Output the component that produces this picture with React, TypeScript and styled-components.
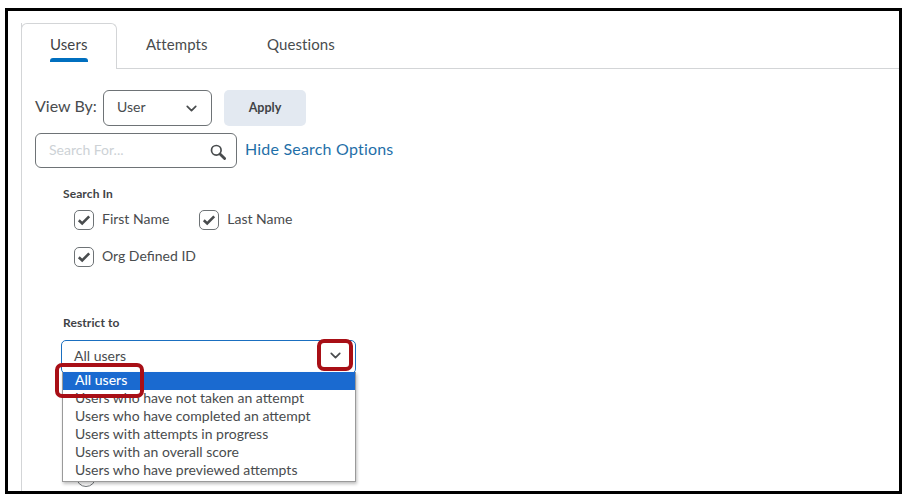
import styled, { createGlobalStyle } from 'styled-components'
import { ChevronDown } from 'lucide-react'

const Global = createGlobalStyle`
  html, body { margin: 0; padding: 0; background: #fff; }
  body { font-family: Lato, "Open Sans", sans-serif; color: #494c4e; }
`

const Frame = styled.div`
  box-sizing: border-box;
  width: 897px;
  height: 486px;
  margin: 8px 0 0 5px;
  border: 3px solid #000;
  padding: 12px 0 0 13px;
  overflow: hidden;
  background: #fff;
`

const Panel = styled.div`
  height: 480px;
  border-left: 1px solid #d3d5d7;
`

const TabBar = styled.div`
  display: flex;
  height: 45px;
  margin-left: -1px;
  border-bottom: 1px solid #d3d5d7;
`

const Tab = styled.div<{ $active?: boolean; $width: number }>`
  box-sizing: border-box;
  position: relative;
  width: ${p => p.$width}px;
  height: ${p => (p.$active ? 46 : 45)}px;
  padding: 12px 0 0 ${p => (p.$active ? 28 : 29)}px;
  font-size: 15px;
  line-height: 18px;
  letter-spacing: 0.1px;
  background: #fff;
  ${p =>
    p.$active &&
    `border: 1px solid #d3d5d7; border-bottom: 0; border-radius: 6px 6px 0 0; padding-top: 11px; color: #3f4346;`}
`

const TabMark = styled.span`
  position: absolute;
  left: 28px;
  top: 34px;
  width: 38px;
  height: 4px;
  border-radius: 3px 3px 0 0;
  background: #006fbf;
`

const Content = styled.div`
  padding: 0 0 0 13px;
`

const ViewRow = styled.div`
  display: flex;
  align-items: center;
  height: 36px;
  margin-top: 21px;
`

const ViewLabel = styled.span`
  width: 68px;
  font-size: 16px;
  margin-top: -5px;
`

const Caret = styled(ChevronDown)`
  margin-top: 3px;
`

const ViewSelect = styled.div`
  box-sizing: border-box;
  display: flex;
  align-items: center;
  justify-content: space-between;
  width: 109px;
  height: 36px;
  padding: 0 11px 3px 13px;
  border: 1px solid #6e7376;
  border-radius: 6px;
  font-size: 14px;
`

const ApplyButton = styled.div`
  display: flex;
  align-items: center;
  justify-content: center;
  width: 82px;
  height: 36px;
  padding-bottom: 2px;
  box-sizing: border-box;
  margin-left: 12px;
  border-radius: 5px;
  background: #e3e9f1;
  color: #3f4346;
  font-size: 12.5px;
  font-weight: 700;
`

const SearchRow = styled.div`
  display: flex;
  align-items: center;
  height: 35px;
  margin-top: 7px;
`

const SearchBox = styled.div`
  box-sizing: border-box;
  display: flex;
  align-items: center;
  justify-content: space-between;
  width: 202px;
  height: 35px;
  padding: 0 10px 3px 13px;
  border: 1px solid #6e7376;
  border-radius: 6px;
  font-size: 14px;
  color: #cdd2d6;
`

const SearchGlyph = styled.svg`
  width: 16px;
  height: 16px;
  margin-top: 6px;
  color: #494c4e;
`

const HideLink = styled.span`
  margin: -5px 0 0 8px;
  font-size: 16px;
  letter-spacing: 0.2px;
  color: #1f6fa8;
`

const Options = styled.div`
  padding: 18px 0 0 28px;
`

const SectionLabel = styled.div`
  font-size: 12px;
  line-height: 16px;
  font-weight: 700;
  letter-spacing: 0.1px;
  color: #3f4346;
`

const CheckRow = styled.div`
  display: flex;
  height: 20px;
  margin: 8px 0 17px 11px;
`

const CheckItem = styled.label`
  display: flex;
  align-items: center;
  gap: 8px;
  margin-right: 30px;
  font-size: 14px;
  padding-bottom: 3px;
`

const CheckBox = styled.span`
  box-sizing: border-box;
  display: flex;
  align-items: center;
  justify-content: center;
  width: 20px;
  height: 20px;
  margin-bottom: -3px;
  border: 1px solid #6e7376;
  border-radius: 5px;
  color: #494c4e;
`

const RestrictLabel = styled(SectionLabel)`
  margin-top: 48px;
`

const RestrictWrap = styled.div`
  position: relative;
  width: 295px;
  margin: 9px 0 0 -2px;
`

const RestrictSelect = styled.div`
  box-sizing: border-box;
  display: flex;
  align-items: center;
  justify-content: space-between;
  height: 34px;
  padding: 0 11px 4px 12px;
  border: 1px solid #1a6fc0;
  border-radius: 5px;
  font-size: 14px;
`

const Menu = styled.ul`
  position: absolute;
  z-index: 2;
  left: 1px;
  top: 32px;
  width: 294px;
  height: 110px;
  margin: 0;
  padding: 0;
  list-style: none;
  background: #fff;
  border: 1px solid #9a9a9a;
  border-top: 0;
  box-sizing: border-box;
  box-shadow: 1px 2px 3px rgba(0, 0, 0, 0.25);
`

const MenuItem = styled.li<{ $selected?: boolean; $clipped?: boolean }>`
  height: 18px;
  padding-left: 12px;
  font-size: 14px;
  line-height: ${p => (p.$clipped ? 15 : 16)}px;
  white-space: nowrap;
  color: ${p => (p.$selected ? '#fff' : '#494c4e')};
  background: ${p => (p.$selected ? '#1a6ad0' : 'transparent')};
  font-weight: ${p => (p.$selected ? 500 : 400)};
`

const Callout = styled.span<{ $left: number; $top: number; $width: number; $height: number }>`
  box-sizing: border-box;
  position: absolute;
  z-index: 3;
  left: ${p => p.$left}px;
  top: ${p => p.$top}px;
  width: ${p => p.$width}px;
  height: ${p => p.$height}px;
  border: 4px solid #a80f16;
  border-radius: 7px;
`

const Radio = styled.span`
  position: absolute;
  left: 15px;
  top: 127px;
  width: 20px;
  height: 20px;
  border: 1px solid #6e7376;
  border-radius: 50%;
  box-sizing: border-box;
`

const checks = [['First Name', 'Last Name'], ['Org Defined ID']]
const restrictOptions = [
  'Users who have not taken an attempt',
  'Users who have completed an attempt',
  'Users with attempts in progress',
  'Users with an overall score',
  'Users who have previewed attempts',
]

export default function App() {
  return (
    <>
      <Global />
      <Frame>
        <Panel>
          <TabBar>
            <Tab $active $width={96}>
              Users
              <TabMark />
            </Tab>
            <Tab $width={121}>Attempts</Tab>
            <Tab $width={120}>Questions</Tab>
          </TabBar>
          <Content>
            <ViewRow>
              <ViewLabel>View By:</ViewLabel>
              <ViewSelect>
                User
                <Caret size={17} strokeWidth={2.4} />
              </ViewSelect>
              <ApplyButton>Apply</ApplyButton>
            </ViewRow>
            <SearchRow>
              <SearchBox>
                Search For...
                <SearchGlyph viewBox="0 0 16 16" fill="none" stroke="currentColor">
                  <circle cx="6.3" cy="6.3" r="4.8" strokeWidth="1.7" />
                  <path d="M10 10l4.6 4.6" strokeWidth="2.8" strokeLinecap="round" />
                </SearchGlyph>
              </SearchBox>
              <HideLink>Hide Search Options</HideLink>
            </SearchRow>
            <Options>
              <SectionLabel>Search In</SectionLabel>
              {checks.map(row => (
                <CheckRow key={row[0]}>
                  {row.map(label => (
                    <CheckItem key={label}>
                      <CheckBox>
                        <svg width="14" height="14" viewBox="0 0 14 14" fill="none" stroke="currentColor">
                          <path d="M1.8 7.2L5.2 10.4L12.2 3.4" strokeWidth="2.6" />
                        </svg>
                      </CheckBox>
                      {label}
                    </CheckItem>
                  ))}
                </CheckRow>
              ))}
              <RestrictLabel>Restrict to</RestrictLabel>
              <RestrictWrap>
                <RestrictSelect>
                  All users
                  <ChevronDown size={17} strokeWidth={2.4} />
                </RestrictSelect>
                <Radio />
                <Menu>
                  <MenuItem $selected>All users</MenuItem>
                  {restrictOptions.map((o, i) => (
                    <MenuItem key={o} $clipped={i === 0}>
                      {o}
                    </MenuItem>
                  ))}
                </Menu>
                <Callout $left={-6} $top={23} $width={89} $height={35} />
                <Callout $left={256} $top={-1} $width={36} $height={32} />
              </RestrictWrap>
            </Options>
          </Content>
        </Panel>
      </Frame>
    </>
  )
}
